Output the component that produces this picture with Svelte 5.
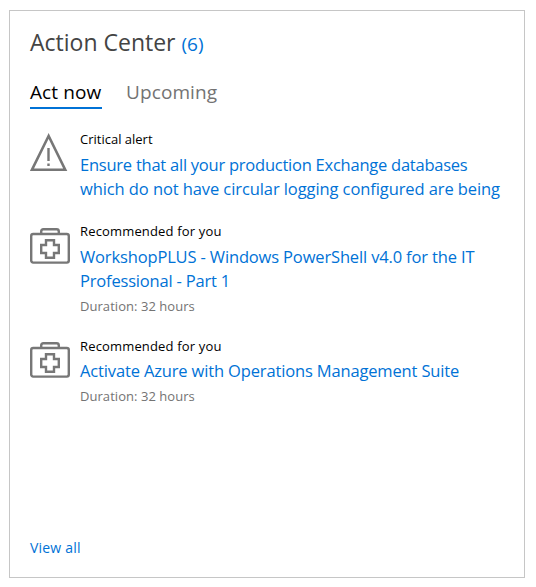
<script>
  const items = [
    { icon: 'alert', label: 'Critical alert', lines: ['Ensure that all your production Exchange databases', 'which do not have circular logging configured are being'] },
    { icon: 'kit', label: 'Recommended for you', lines: ['WorkshopPLUS - Windows PowerShell v4.0 for the IT', 'Professional - Part 1'], duration: 'Duration: 32 hours' },
    { icon: 'kit', label: 'Recommended for you', lines: ['Activate Azure with Operations Management Suite'], duration: 'Duration: 32 hours' }
  ];
</script>

<section class="card">
  <h2><span class="title">Action Center</span><span class="count">(6)</span></h2>
  <nav>
    <span class="tab active">Act now</span>
    <span class="tab upcoming">Upcoming</span>
  </nav>
  <ul>
    {#each items as item, i}
      <li class="item item{i}">
        {#if item.icon === 'alert'}
          <svg class="alert" width="40" height="40" viewBox="0 0 40 40" fill="none" stroke="#777">
            <path d="M18.6 3L2 36.7H35.2Z" stroke-width="2.6" />
            <path d="M18.5 15V28M18.5 30.5V33" stroke-width="2.4" />
          </svg>
        {:else}
          <svg class="kit" width="40" height="36" viewBox="0 0 40 36" fill="none" stroke="#777" stroke-width="2.4">
            <rect x="1.2" y="6" width="37.6" height="28.6" rx="2" />
            <path d="M11.2 6V3.4Q11.2 1.2 13.4 1.2H26.6Q28.8 1.2 28.8 3.4V6" />
            <path d="M16 12.2H24V17H28.8V25H24V29.8H16V25H11.2V17H16Z" />
          </svg>
        {/if}
        <div class="body">
          <div><span class="label">{item.label}</span></div>
          <a href="#item">
            {#each item.lines as line, n}<span class="line l{i}{n}">{line}</span>{/each}
          </a>
          {#if item.duration}<div class="duration">{item.duration}</div>{/if}
        </div>
      </li>
    {/each}
  </ul>
  <a class="all" href="#all">View all</a>
</section>

<style>
  :global(body) { background: #fff; }
  .card {
    box-sizing: border-box;
    width: 516px;
    height: 568px;
    margin: 10px 0 0 9px;
    padding: 15px 20px 19px;
    border: 1px solid #c6c6c6;
    display: flex;
    flex-direction: column;
    font-family: "Open Sans", "Noto Sans", sans-serif;
    white-space: nowrap;
  }
  a { color: #0072d6; text-decoration: none; }
  h2 { margin: 0; height: 32px; line-height: 32px; font-weight: 400; font-size: 23px; color: #444; display: flex; align-items: baseline; }
  .count { font-size: 19px; color: #0072d6; margin-left: 6px; }
  nav { display: flex; gap: 24px; margin-top: 19px; height: 32px; }
  .tab { box-sizing: border-box; height: 32px; line-height: 31px; font-size: 19px; letter-spacing: 0.1px; color: #737373; }
  .active { color: #000; border-bottom: 2px solid #0072d6; width: 72px; }
  ul { list-style: none; margin: 20px 0 0; padding: 0; }
  .item { display: flex; gap: 10px; }
  .item0 { height: 92px; }
  .item1 { height: 115px; }
  svg { flex: none; }
  .alert { margin-top: 4px; }
  .kit { margin-top: 7px; }
  .item2 .kit { margin-top: 6px; }
  .body { line-height: 20px; font-size: 13px; color: #000; }
  .body a { display: block; margin-top: 4px; font-size: 16.5px; line-height: 24px; }
  .item2 .body a { margin-top: 3px; }
  .item1 .label, .item2 .label { letter-spacing: 0.16px; }
  .line { display: block; width: max-content; letter-spacing: -0.15px; }
  .l00 { letter-spacing: -0.24px; }
  .l01 { letter-spacing: -0.09px; }
  .l11 { letter-spacing: -0.19px; }
  .duration { color: #737373; margin-top: 3px; letter-spacing: 0.05px; }
  .all { margin-top: auto; font-size: 14px; line-height: 20px; letter-spacing: 0.2px; }
</style>
